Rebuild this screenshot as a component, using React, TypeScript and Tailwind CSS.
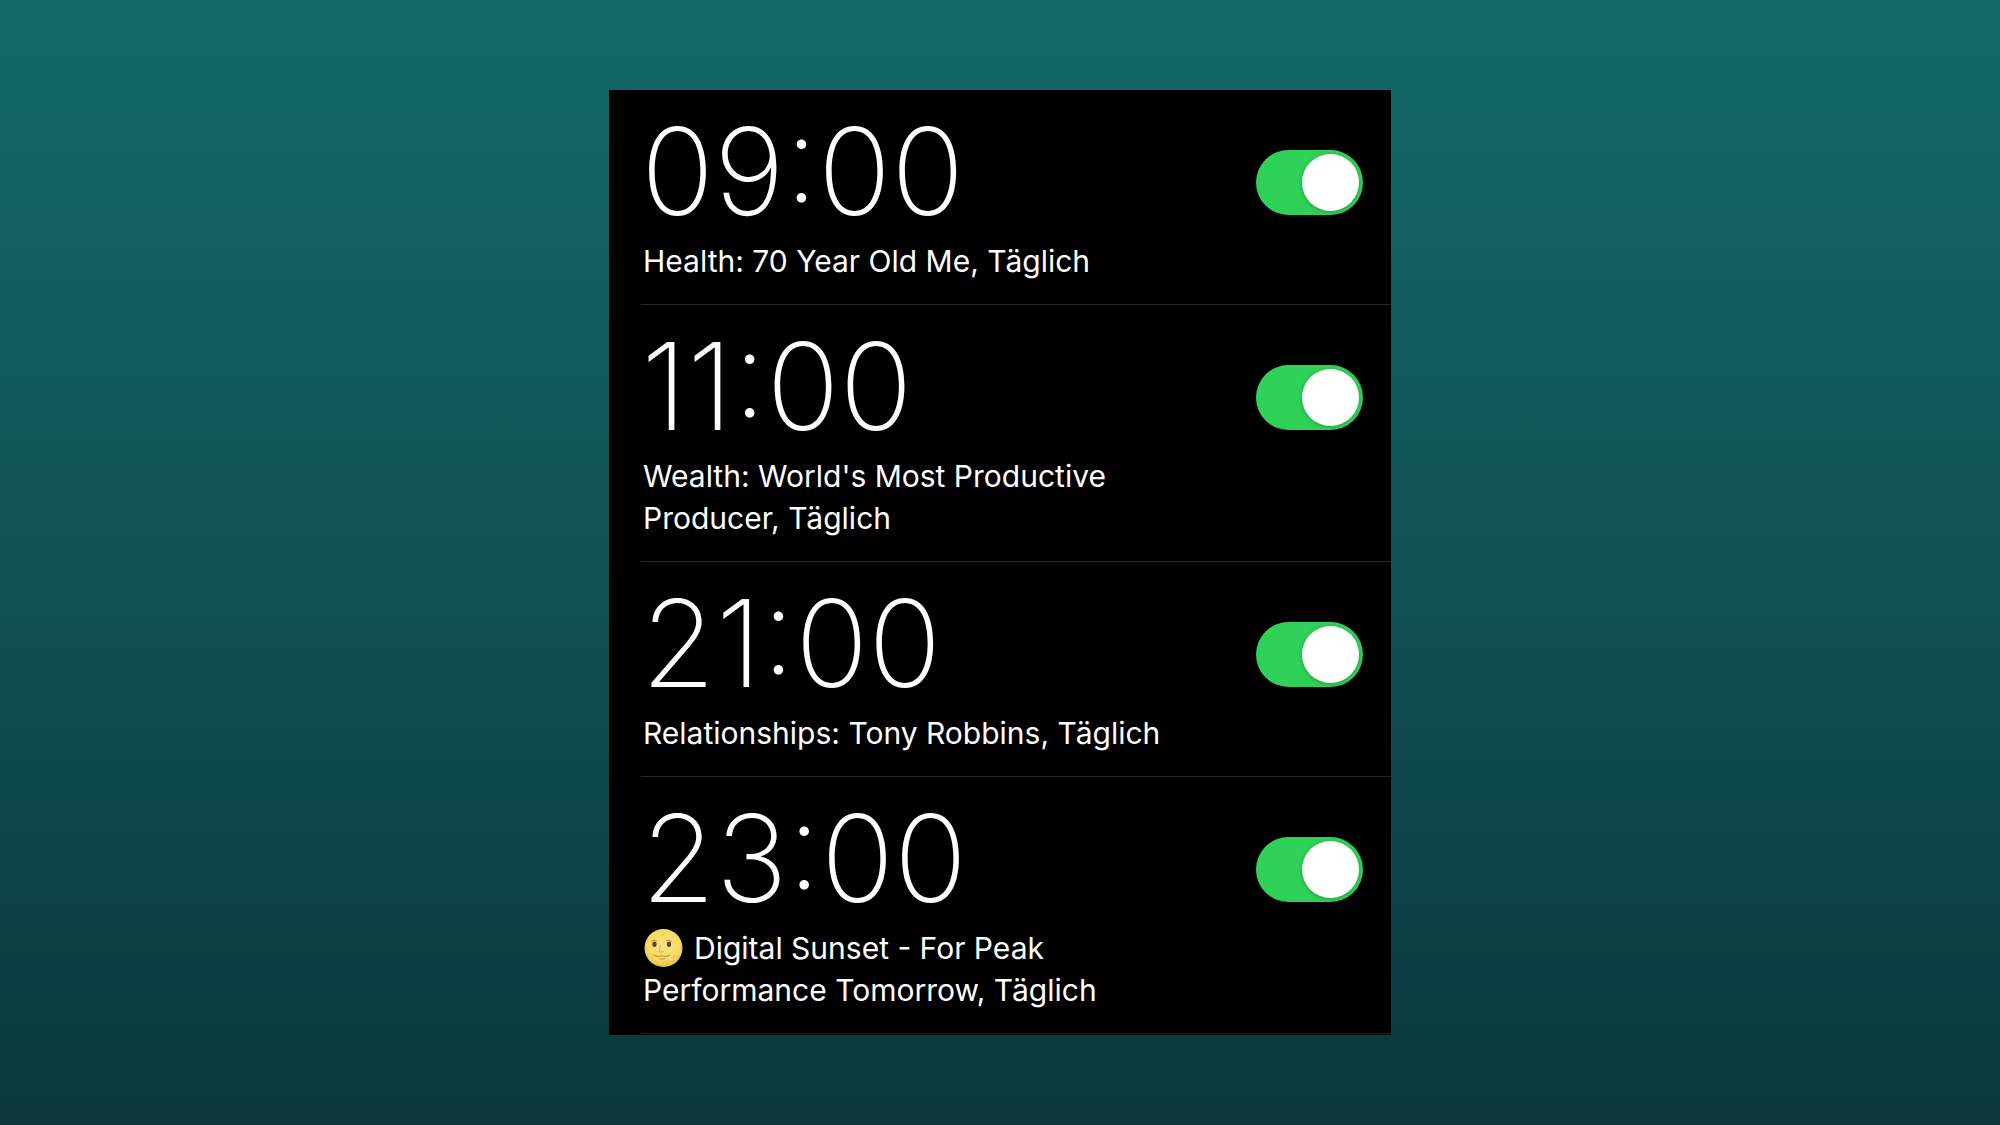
import { useState } from "react";

type Alarm = {
    id: string;
    time: string;
    label: string;
    moon?: boolean;
};

const ALARMS: Alarm[] = [
    { id: "health", time: "09:00", label: "Health: 70 Year Old Me, Täglich" },
    { id: "wealth", time: "11:00", label: "Wealth: World's Most Productive Producer, Täglich" },
    { id: "relationships", time: "21:00", label: "Relationships: Tony Robbins, Täglich" },
    { id: "sunset", time: "23:00", label: "Digital Sunset - For Peak Performance Tomorrow, Täglich", moon: true },
];

const switchClass = "relative mt-[60px] h-[65px] w-[107px] shrink-0 cursor-pointer appearance-none rounded-full bg-[#39393d]" +
" checked:bg-[#30d158] before:absolute before:left-1 before:top-1 before:size-[57px] before:rounded-full before:bg-white" +
" before:shadow-[0_1px_4px_rgba(0,0,0,0.25)] checked:before:left-[46px]";

function MoonFace() {
    return (
        <svg className="mr-[11px] inline-block size-10 align-[-9px]" viewBox="0 0 40 40" aria-hidden="true">
            <defs>
                <radialGradient id="moon" cx="0.5" cy="0.42" r="0.6">
                    <stop offset="0" stopColor="#fbe27c" />
                    <stop offset="0.7" stopColor="#f8db63" />
                    <stop offset="1" stopColor="#e6b93f" />
                </radialGradient>
            </defs>
            <circle cx="20.500" cy="20" r="19" fill="url(#moon)" />
            <g fill="#ecc552" opacity="0.6">
                <circle cx="9" cy="27" r="2" />
                <circle cx="31" cy="29" r="2" />
                <circle cx="24" cy="34" r="2" />
                <circle cx="20" cy="6" r="1.5" />
            </g>
            {/* eyes */}
            <ellipse cx="12" cy="16.5" rx="3.4" ry="2.8" fill="#f3dfa0" />
            <ellipse cx="26" cy="16.5" rx="3.4" ry="2.8" fill="#f3dfa0" />
            <ellipse cx="11.5" cy="16.3" rx="2.1" ry="2.7" fill="#5c4218" />
            <ellipse cx="26" cy="16.3" rx="2.1" ry="2.7" fill="#5c4218" />
            <path d="M8 13.5q3-2.5 6-.5M23 13q3-2 6 .5" fill="none" stroke="#c9973a" strokeWidth="1" />
            {/* nose and mouth */}
            <path d="M17.500 17q-.5 4-2 6.500q2.500 1.500 5 0" fill="none" stroke="#dfb04a" strokeWidth="1" />
            <path d="M11 27q3.500 2.500 7.500.8q4.500 1.700 8-.8M16 30.500q3 1.200 6 0" fill="none" stroke="#c9963f" strokeWidth="1.200" />
        </svg>
    )
}

function AlarmRow({ alarm }: { alarm: Alarm }) {
    const [on, setOn] = useState(true);
    return (
        <li className="ml-8 flex items-start justify-between border-b border-[#262628] pr-7 pb-[22px]">
            <label htmlFor={alarm.id} className="block max-w-[540px] cursor-pointer pt-[21px]">
                <time className="block text-[121px] leading-[120px] font-[250]">{alarm.time}</time>
                <span className="mt-[9px] block pl-[2px] text-[30px] leading-[42px]">
                    {alarm.moon && <MoonFace />}
                    {alarm.label}
                </span>
            </label>
            <input
                id={alarm.id}
                type="checkbox"
                role="switch"
                className={switchClass}
                checked={on}
                onChange={(e) => setOn(e.target.checked)}
            />
        </li>
    )
}

export default function App() {
    return (
        <main className="flex min-h-screen items-center justify-center bg-linear-to-b from-[#13696a] via-[#105354] to-[#0a383a] font-['Inter',sans-serif] text-white">
            <ul className="w-full max-w-[782px] bg-black pb-px">
                {ALARMS.map((alarm) => <AlarmRow key={alarm.id} alarm={alarm} />)}
            </ul>
        </main>
    )
}
